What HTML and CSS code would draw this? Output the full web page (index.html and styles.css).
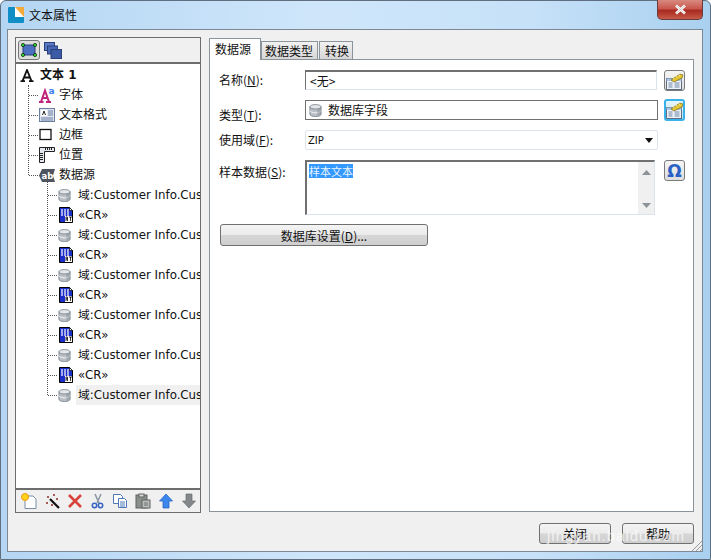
FILE: index.html
```html
<!DOCTYPE html>
<html lang="zh-CN">
<head>
<meta charset="utf-8">
<title>文本属性</title>
<link rel="stylesheet" href="styles.css">
</head>
<body>
<svg class="defs" width="0" height="0">
  <defs>
    <symbol id="db" viewBox="0 0 14 14">
      <path d="M1 3v8c0 1.500 2.700 2.500 6 2.500s6-1 6-2.500V3z" fill="#b9bfc4" stroke="#77808a" stroke-width=".9"/>
      <path d="M1 7c0 1.500 2.700 2.500 6 2.500S13 8.500 13 7" fill="none" stroke="#fff" stroke-width=".9"/>
      <path d="M9 4.500h4v6.500l-4 2z" fill="#8d969e" opacity=".55"/>
      <ellipse cx="7" cy="3" rx="6" ry="2.400" fill="#e4e7ea" stroke="#77808a" stroke-width=".9"/>
    </symbol>
    <symbol id="rt" viewBox="0 0 16 16">
      <path d="M1.500.5h10l3 3v12h-13z" fill="#1a2fc8" stroke="#000"/>
      <path d="M4 2v7M7 2v7M10 2v7" stroke="#fff" stroke-width="1.200"/>
      <path d="M11.500.5v3h3z" fill="#fff" stroke="#000" stroke-width=".7"/>
      <rect x="7" y="9" width="7" height="6" fill="#fff"/>
      <path d="M8 10v4M8 10h1.500v2H8M9.500 12v2M11 10h3M12.500 10v4" fill="none" stroke="#000" stroke-width=".8"/>
    </symbol>
    <symbol id="edit" viewBox="0 0 20 20">
      <rect x="1.500" y="7.500" width="15" height="11" fill="#eef1f6" stroke="#5d6c80"/>
      <rect x="1.500" y="7.500" width="15" height="2.500" fill="#a8c4e6"/>
      <path d="M3.500 12h4M3.500 14h4M3.500 16h4M9.500 12h5M9.500 14h5M9.500 16h5" stroke="#6d86a6"/>
      <path d="M6 9l9-6 3 1-1 3-8 4z" fill="#e2c531" stroke="#7b6a12" stroke-width=".7"/>
      <path d="M7 5l2 3M10 3.500l2 3M13 2.500l2 3" stroke="#fff6b8" stroke-width=".8"/>
    </symbol>
  </defs>
</svg>
<div class="window">
  <header class="titlebar">
    <svg class="app-icon" viewBox="0 0 16 16"><rect width="16" height="16" rx="1" fill="#0f8fc6"/><rect x="7" width="9" height="10" fill="#fff"/><path d="M7 0h9v10z" fill="#f4a83a"/></svg>
    <span class="title">文本属性</span>
  </header>
  <button class="close" aria-label="关闭"><svg viewBox="0 0 13 11" width="13" height="11"><path d="M2 1.500l9 8M11 1.500l-9 8" stroke="#fff" stroke-width="2.800"/><path d="M2 1.500l9 8M11 1.500l-9 8" stroke="#5d5d62" stroke-width=".6" opacity=".5"/></svg></button>

  <div class="client">
    <div class="panes">
      <aside class="left">
        <div class="top-tools">
          <span class="tool-on">
            <svg viewBox="0 0 18 16" width="18" height="16"><rect x="3" y="3" width="12" height="10" fill="#4c6fc2" stroke="#2c3f78"/><g fill="#2fe02f" stroke="#0a2a0a" stroke-width=".8"><circle cx="3" cy="3" r="1.600"/><circle cx="15" cy="3" r="1.600"/><circle cx="3" cy="13" r="1.600"/><circle cx="15" cy="13" r="1.600"/></g></svg>
          </span>
          <svg class="stack" viewBox="0 0 18 17" width="18" height="17"><g stroke="#2c3f78" fill="#5a7cc8"><rect x=".5" y=".5" width="10" height="8"/><rect x="3.500" y="4" width="10" height="8" fill="#4567b6"/><rect x="7" y="7.500" width="10.500" height="9" fill="#3c5aa6"/></g></svg>
        </div>
        <div class="tree">
          <div class="row root"><svg class="ic-a" viewBox="0 0 14 13" width="14" height="13"><path d="M.5 12.200h4.500M9 12.200h4.500M2.500 12.200L7 1l4.500 11.200M4.500 8.500h5" fill="none" stroke="#111" stroke-width="1.800"/></svg><b>文本 1</b></div>
          <div class="l1">
            <div class="row"><i class="hline"></i><svg class="ic" viewBox="0 0 16 16"><path d="M0 15h4.500M7 15h5M2 15L6 3.500 10 15M3.500 11h5" fill="none" stroke="#c0247c" stroke-width="2"/><text x="9.500" y="7" class="sup">a</text></svg><span>字体</span></div>
            <div class="row"><i class="hline"></i><svg class="ic" viewBox="0 0 16 14"><rect x=".5" y=".5" width="15" height="13" fill="#dfe6f2" stroke="#6a7ea0"/><rect x="2" y="2" width="6" height="6" fill="#fff"/><path d="M3.500 7L5 3l1.500 4" fill="none" stroke="#222"/><path d="M9 3h5M9 5h5M9 7h5M2 10h12M2 12h12" stroke="#6a7ea0"/></svg><span>文本格式</span></div>
            <div class="row"><i class="hline"></i><svg class="ic" viewBox="0 0 16 16"><rect x="1" y="2.500" width="11" height="10" fill="#fff" stroke="#111" stroke-width="1.300"/></svg><span>边框</span></div>
            <div class="row"><i class="hline"></i><svg class="ic" viewBox="0 0 16 16"><path d="M.5.500h15v4h-10v11h-5z" fill="#e4e8ee" stroke="#222"/><path d="M6.500 1v2M8.500 1v2M10.500 1v2M12.500 1v2M1 6.500h3M1 8.500h3M1 10.500h3M1 12.500h3" stroke="#222"/></svg><span>位置</span></div>
            <div class="row"><i class="hline"></i><svg class="ic-wide" viewBox="0 0 16 13" width="16" height="13"><path d="M3 0h13l-2 6.500 2 6.500H3L0 6.500z" fill="#4d535f"/><text x="2.500" y="9.500" class="ab">ab</text></svg><span>数据源</span></div>
          </div>
          <div class="l2">
            <div class="row"><i class="hline"></i><svg class="ic db"><use href="#db"/></svg><span>域:Customer Info.Cus</span></div>
            <div class="row"><i class="hline"></i><svg class="ic rt"><use href="#rt"/></svg><span>«CR»</span></div>
            <div class="row"><i class="hline"></i><svg class="ic db"><use href="#db"/></svg><span>域:Customer Info.Cus</span></div>
            <div class="row"><i class="hline"></i><svg class="ic rt"><use href="#rt"/></svg><span>«CR»</span></div>
            <div class="row"><i class="hline"></i><svg class="ic db"><use href="#db"/></svg><span>域:Customer Info.Cus</span></div>
            <div class="row"><i class="hline"></i><svg class="ic rt"><use href="#rt"/></svg><span>«CR»</span></div>
            <div class="row"><i class="hline"></i><svg class="ic db"><use href="#db"/></svg><span>域:Customer Info.Cus</span></div>
            <div class="row"><i class="hline"></i><svg class="ic rt"><use href="#rt"/></svg><span>«CR»</span></div>
            <div class="row"><i class="hline"></i><svg class="ic db"><use href="#db"/></svg><span>域:Customer Info.Cus</span></div>
            <div class="row"><i class="hline"></i><svg class="ic rt"><use href="#rt"/></svg><span>«CR»</span></div>
            <div class="row selected"><i class="hline"></i><svg class="ic db"><use href="#db"/></svg><span>域:Customer Info.Cus</span></div>
          </div>
        </div>
        <div class="bottom-tools">
          <svg viewBox="0 0 16 16"><path d="M4 3h8l3 3v9.500H4z" fill="#fff" stroke="#7a8ea8"/><circle cx="4" cy="4" r="3.500" fill="#ffd21e" stroke="#ee9a10"/></svg>
          <svg viewBox="0 0 16 16"><path d="M6 6l9 9" stroke="#111" stroke-width="2.200"/><path d="M3 4h2M4 3v2M9 2h2M10 1v2M2 10h2M3 9v2M7 12h2M8 11v2M12 6h2M13 5v2" stroke="#8a2b20"/></svg>
          <svg viewBox="0 0 16 16"><path d="M2 2l12 12M14 2L2 14" stroke="#d8423a" stroke-width="2.600"/></svg>
          <svg viewBox="0 0 16 16"><path d="M5 1l4 9M11 1l-4 9" stroke="#8e99a6" stroke-width="1.600"/><circle cx="4.500" cy="12.500" r="2.200" fill="none" stroke="#3764c0" stroke-width="1.500"/><circle cx="10.500" cy="12.500" r="2.200" fill="none" stroke="#3764c0" stroke-width="1.500"/></svg>
          <svg viewBox="0 0 16 16"><path d="M1.500 1.500h7l2 2v7h-9z" fill="#fff" stroke="#4c78b8"/><path d="M6.500 5.500h6l2 2v7h-8z" fill="#fff" stroke="#4c78b8"/><path d="M8 9h5M8 11h5M8 13h5" stroke="#4c78b8"/></svg>
          <svg viewBox="0 0 16 16"><rect x="1" y="2" width="11" height="13" fill="#8b8f8c" stroke="#5f6361"/><rect x="4" y="1" width="5" height="3" fill="#d9dad8" stroke="#5f6361"/><rect x="7" y="7" width="8" height="8" fill="#b9bcb9" stroke="#5f6361"/><path d="M9 10h4M9 12h4" stroke="#6f7370"/></svg>
          <svg viewBox="0 0 16 16"><path d="M8 1l6.500 7H11v7H5V8H1.500z" fill="#3c87ee" stroke="#1f5ac0" stroke-width=".7"/></svg>
          <svg viewBox="0 0 16 16"><path d="M5 1h6v7h3.500L8 15 1.500 8H5z" fill="#85888a" stroke="#6a6d6f" stroke-width=".7"/></svg>
        </div>
      </aside>

      <section class="right">
        <nav class="tabs">
          <span class="tab active">数据源</span>
          <span class="tab second">数据类型</span>
          <span class="tab third">转换</span>
        </nav>
        <div class="page">
          <div class="form">
            <label class="lbl">名称(<u>N</u>):</label>
            <div class="field sunken">&lt;无&gt;</div>
            <span class="sq"><svg width="20" height="20"><use href="#edit"/></svg></span>

            <label class="lbl lbl-type">类型(<u>T</u>):</label>
            <div class="field flat"><svg class="ic-f"><use href="#db"/></svg>数据库字段</div>
            <span class="sq hot"><svg width="20" height="20"><use href="#edit"/></svg></span>

            <label class="lbl">使用域(<u>F</u>):</label>
            <div class="field combo">ZIP<svg class="arrow" viewBox="0 0 8 5" width="8" height="5"><path d="M0 0h8L4 5z" fill="#111"/></svg></div>
            <span></span>

            <label class="lbl lbl-sample">样本数据(<u>S</u>):</label>
            <div class="memo"><div class="memo-text"><mark>样本文本</mark></div><div class="scroll"><svg viewBox="0 0 9 5" width="9" height="5"><path d="M0 5h9L4.500 0z" fill="#8d9499"/></svg><svg viewBox="0 0 9 5" width="9" height="5"><path d="M0 0h9L4.500 5z" fill="#8d9499"/></svg></div></div>
            <span class="sq omega">Ω</span>
          </div>
          <button class="btn wide">数据库设置(<u>D</u>)...</button>
        </div>
      </section>
    </div>
    <footer class="footer">
      <button class="btn foot">关闭</button>
      <button class="btn foot">帮助</button>
    </footer>
    <svg class="grip" viewBox="0 0 11 11" width="11" height="11"><path d="M11 1L1 11M11 5l-6 6M11 9l-2 2" stroke="#9a9a9a" stroke-width="1"/></svg>
  </div>
  <div class="watermark">jingyan.baidu.com</div>
</div>
</body>
</html>
```

FILE: styles.css
```css
* { box-sizing: border-box; }
html, body { margin: 0; padding: 0; }
body {
  width: 711px; height: 560px; overflow: hidden;
  font: 12px/20px "DejaVu Sans", "Noto Sans CJK SC", sans-serif;
  color: #111;
  background: #fff;
}
.defs { position: absolute; }
.window {
  position: relative;
  width: 711px; height: 560px;
  display: flex; flex-direction: column;
  padding: 0 7px 7px 6px;
  background: linear-gradient(90deg, #b4d6f3 0%, #cfe6fa 45%, #c6e1f8 75%, #a9d0ef 100%);
  border: 1px solid #5f6f7f;
  border-radius: 6px 6px 0 0;
}
.titlebar { height: 28px; display: flex; align-items: center; gap: 5px; flex: none; padding-left: 1px; }
.app-icon { width: 16px; height: 16px; flex: none; }
.title { font: 12px/16px "Noto Sans CJK SC", sans-serif; color: #111; margin-top: -1px; }
.close {
  position: absolute; top: -1px; right: 7px;
  width: 46px; height: 20px; padding: 0;
  display: flex; align-items: center; justify-content: center;
  background: linear-gradient(#d88a80 0%, #c9584e 45%, #a92a20 55%, #c65a48 100%);
  border: 1px solid #6b3b3b; border-top: 0;
  border-radius: 0 0 5px 5px;
}
.client {
  position: relative;
  flex: 1; min-height: 0;
  display: flex; flex-direction: column;
  background: #f0f0f0;
  border: 1px solid #7d8894;
  padding: 7px 8px 7px 7px;
}
.panes { display: flex; gap: 8px; height: 476px; flex: none; }
.left {
  width: 186px; flex: none;
  display: flex; flex-direction: column;
  background: #fff;
  border: 1px solid #6d6d6d;
  overflow: hidden;
}
.top-tools {
  height: 26px; flex: none;
  display: flex; align-items: center; gap: 4px;
  padding-left: 2px;
  background: #f0f0f0;
  border-bottom: 2px solid #6d6d6d;
}
.tool-on {
  width: 22px; height: 20px;
  display: flex; align-items: center; justify-content: center;
  background: #dcdcdc;
  border: 1px solid #777; border-radius: 3px;
}
.tree { flex: 1; min-height: 0; padding-top: 1px; }
.row {
  position: relative;
  height: 20px; display: flex; align-items: center;
  white-space: nowrap;
}
.root { padding-left: 4px; gap: 6px; }
.root b { font-weight: 700; }
.l1, .l2 { position: relative; }
.l1::before, .l2::before {
  content: ""; position: absolute; top: 0; width: 0;
  border-left: 1px dotted #555;
}
.l1::before { left: 12px; height: 90px; }
.l2::before { left: 31px; top: -9px; height: 219px; }
.hline { position: absolute; top: 10px; width: 9px; border-top: 1px dotted #555; }
.l1 .hline { left: 13px; }
.l2 .hline { left: 32px; }
.ic { width: 16px; height: 16px; flex: none; }
.ic-wide { flex: none; }
.l1 .row { padding-left: 23px; gap: 4px; }
.l2 .row { padding-left: 42px; gap: 2px; }
.l2 .ic.db { width: 13px; height: 13px; margin-right: 3px; }
.l2 .row span { flex: 1; padding-left: 2px; font-size: 11.8px; letter-spacing: -.02px; }
.selected span { background: #f0f0f0; }
.sup { font: 700 9px "DejaVu Sans", sans-serif; fill: #3d7df0; }
.ab { font: 700 8.5px "DejaVu Sans", sans-serif; fill: #fff; }
.bottom-tools {
  height: 24px; flex: none;
  display: flex; align-items: center; justify-content: space-between;
  padding: 0 3px 0 5px;
  background: #f0f0f0;
  border-top: 2px solid #6d6d6d;
}
.bottom-tools svg { width: 16px; height: 16px; }
.right { flex: 1; min-width: 0; display: flex; flex-direction: column; padding: 1px 0 1px; }
.tabs { display: flex; height: 21px; flex: none; position: relative; z-index: 1; }
.tab {
  height: 18px; margin-top: 3px;
  font: 12px/17px "Noto Sans CJK SC", sans-serif;
  background: linear-gradient(#f2f2f2, #d6d6d6);
  border: 1px solid #8b939b; border-bottom: 0;
}
.tab.active { height: 22px; margin-top: 0; background: #fff; line-height: 20px; padding: 0 9px 0 5px; }
.second { padding: 0 4px 0 3px; }
.third { padding: 0 3px 0 5px; margin-left: 1px; }
.page {
  flex: 1; background: #fff;
  border: 1px solid #8b939b;
  padding: 10px 0 0 9px;
}
.form {
  display: grid;
  grid-template-columns: 86px 353px 27px;
  grid-template-rows: 20px 20px 20px 55px;
  row-gap: 10px;
  font-family: "Noto Sans CJK SC", sans-serif;
}
.lbl { line-height: 20px; }
.lbl-type { padding-top: 5px; }
.lbl-sample { padding-top: 2px; }
.field {
  display: flex; align-items: center;
  background: #fff;
  font-size: 12px;
}
.sunken { border: 1px solid #dde3ea; border-top: 2px solid #707070; border-left: 1px solid #707070; width: 352px; padding-left: 4px; }
.flat { border: 1px solid #707070; padding-left: 3px; }
.ic-f { width: 13px; height: 13px; margin-right: 6px; }
.combo {
  width: 353px; justify-content: space-between;
  padding: 0 4px 0 2px;
  font: 10px "DejaVu Sans", sans-serif;
  border: 1px solid #dde3ea; border-radius: 2px;
}
.memo {
  width: 350px; height: 55px; display: flex;
  border-top: 2px solid #707070; border-left: 2px solid #707070;
  border-right: 1px solid #dde3ea; border-bottom: 1px solid #dde3ea;
}
.memo-text { flex: 1; padding: 2px 2px; line-height: 14px; font-size: 11px; }
mark { background: #3399ff; color: #eaf4ff; display: block; width: fit-content; height: 14px; line-height: 14px; }
.scroll {
  width: 16px; background: #f0f0f0;
  display: flex; flex-direction: column; justify-content: space-between; align-items: center;
  padding: 8px 0 6px;
}
.sq {
  width: 21px; height: 21px;
  justify-self: end;
  display: flex; align-items: center; justify-content: center;
  background: linear-gradient(#f5f5f5, #dedede);
  border: 1px solid #7b7b7b; border-radius: 3px;
  overflow: hidden;
}
.sq svg { flex: none; }
.hot { border: 2px solid #38b2e8; background: linear-gradient(#e6f5fd, #bfe3f5); margin-top: -1px; height: 22px; }
.omega { font: 700 17px "DejaVu Sans", sans-serif; color: #2a5fc4; }
.btn {
  font: 12px "Noto Sans CJK SC", sans-serif; color: #111;
  background: linear-gradient(#f4f4f4 0%, #ebebeb 48%, #d6d6d6 52%, #cfcfcf 100%);
  border: 1px solid #707070; border-radius: 3px;
  padding: 0;
}
.wide { display: block; width: 208px; height: 22px; margin-top: 9px; margin-left: 1px; }
.footer { display: flex; justify-content: flex-end; gap: 11px; padding-top: 10px; }
.foot { width: 72px; height: 21px; }
.grip { position: absolute; right: 0; bottom: 0; }
.watermark {
  position: absolute; left: 546px; top: 522px;
  font: 15px/26px "Liberation Sans", sans-serif;
  letter-spacing: 1px;
  color: rgba(255,255,255,.7);
  pointer-events: none; white-space: nowrap;
}
```
